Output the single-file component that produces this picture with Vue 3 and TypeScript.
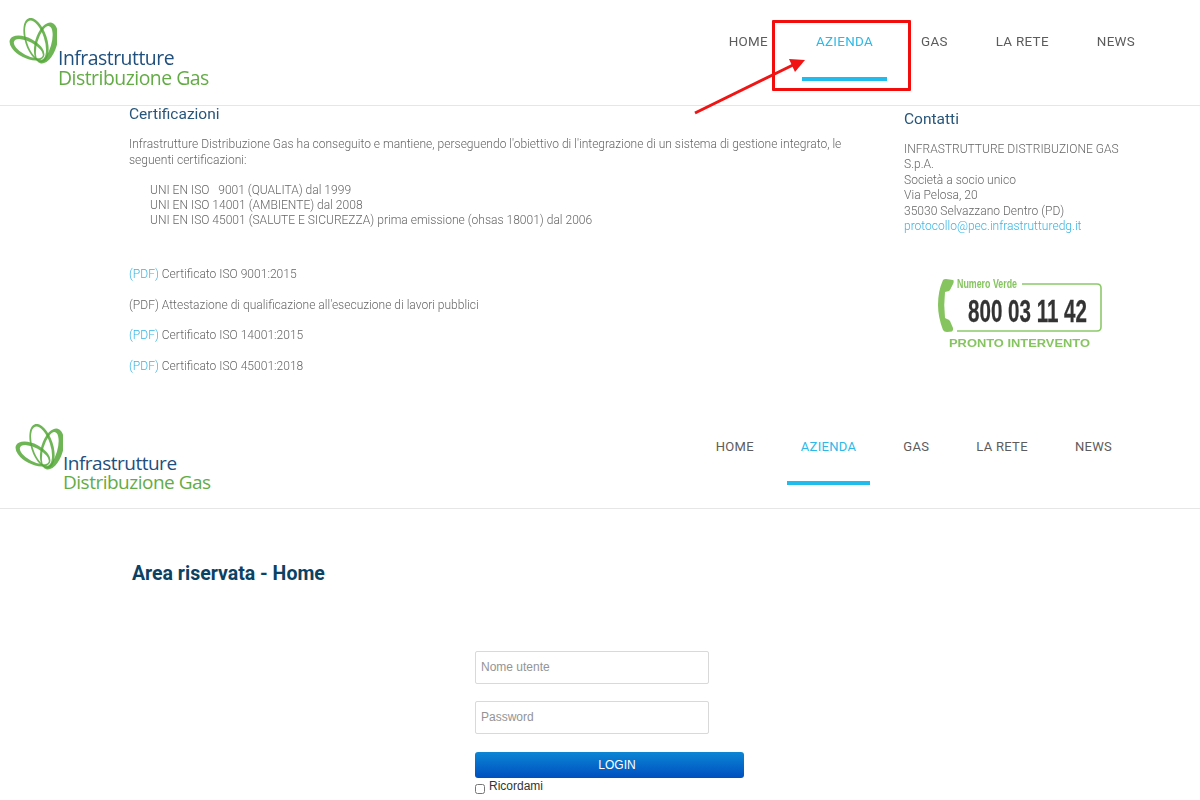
<template>
  <div class="page">
    <!-- simboli condivisi dai due header -->
    <svg class="defs" width="0" height="0">
      <symbol id="logo-mark" viewBox="0 0 48 48">
        <g fill="#55a838" fill-rule="evenodd" fill-opacity="0.85">
          <path transform="translate(18 30) rotate(28)" d="M-19 0a19 10 0 1 0 38 0a19 10 0 1 0 -38 0Z M-14.5 0a16 6.8 0 1 0 32 0a16 6.8 0 1 0 -32 0Z" />
          <path transform="translate(27 22) rotate(72)" d="M-23 0a23 11 0 1 0 46 0a23 11 0 1 0 -46 0Z M-20.5 0.5a20.5 8.8 0 1 0 41 0a20.5 8.8 0 1 0 -41 0Z" />
          <path transform="translate(37 25) rotate(106)" d="M-21 0a21 11 0 1 0 42 0a21 11 0 1 0 -42 0Z M-17 1.5a18 7 0 1 0 36 0a18 7 0 1 0 -36 0Z" />
        </g>
      </symbol>
    </svg>

    <section class="capture">
      <div class="capture-body">
        <header class="site-header top-header">
          <div class="logo">
            <svg class="logo-mark"><use href="#logo-mark" /></svg>
            <div class="logo-text">
              <span class="logo-blue">Infrastrutture</span>
              <span class="logo-green">Distribuzione Gas</span>
            </div>
          </div>
          <nav class="nav">
            <a v-for="item in navItems" :key="item" class="nav-item" :class="{ active: item === 'AZIENDA' }">{{ item }}</a>
          </nav>
        </header>

        <div class="content">
          <main class="main-col">
            <h2 class="section-title">Certificazioni</h2>
            <p class="intro">
              Infrastrutture Distribuzione Gas ha conseguito e mantiene, perseguendo l'obiettivo di l'integrazione di un sistema di gestione integrato, le seguenti certificazioni:
            </p>
            <ul class="cert-list">
              <li v-for="cert in certs" :key="cert">{{ cert }}</li>
            </ul>
            <div class="docs">
              <p v-for="doc in docs" :key="doc.label">
                <span :class="{ link: doc.linked }">(PDF)</span> {{ doc.label }}
              </p>
            </div>
          </main>
          <aside class="side-col">
            <h2 class="section-title contact-title">Contatti</h2>
            <p class="contact">
              INFRASTRUTTURE DISTRIBUZIONE GAS S.p.A.<br />
              Società a socio unico<br />
              Via Pelosa, 20<br />
              35030 Selvazzano Dentro (PD)<br />
              <span class="link">protocollo@pec.infrastrutturedg.it</span>
            </p>
            <svg class="badge" width="170" height="76" viewBox="0 0 170 76">
              <path d="M7 5 Q8 4 10 4 L17 5 Q18 5 17.5 8 L14 15 Q13.5 16 11 16.5 L9 17 Q7.5 30 9 43 L11 44 Q13 44.5 14 46 L17 53 Q17.5 56 16 56.5 L11 57 Q8 57 7 55 Q2 42 2 30 Q2 16 7 5 Z" fill="#86c460" />
              <path d="M86 9 H161 Q165 9 165 13 V52 Q165 56 161 56 H21" fill="none" stroke="#8cc96a" stroke-width="1.6" />
              <text x="21" y="13" class="badge-small" textLength="60" lengthAdjust="spacingAndGlyphs">Numero Verde</text>
              <text x="32" y="47" class="badge-number" textLength="119" lengthAdjust="spacingAndGlyphs">800 03 11 42</text>
              <text x="13" y="72" class="badge-label" textLength="141" lengthAdjust="spacingAndGlyphs">PRONTO INTERVENTO</text>
            </svg>
          </aside>
        </div>
      </div>

      <!-- annotazione sopra la cattura -->
      <div class="highlight"></div>
      <svg class="arrow" width="130" height="70" viewBox="0 0 130 70">
        <line x1="5" y1="63" x2="103" y2="15" stroke="#f01414" stroke-width="3" />
        <polygon points="115,10 99,9 105,22" fill="#f01414" />
      </svg>
    </section>

    <section class="portal">
      <header class="site-header bottom-header">
        <div class="logo">
          <svg class="logo-mark"><use href="#logo-mark" /></svg>
          <div class="logo-text">
            <span class="logo-blue">Infrastrutture</span>
            <span class="logo-green">Distribuzione Gas</span>
          </div>
        </div>
        <nav class="nav">
          <a v-for="item in navItems" :key="item" class="nav-item" :class="{ active: item === 'AZIENDA' }">{{ item }}</a>
        </nav>
      </header>

      <h1 class="portal-title">Area riservata - Home</h1>

      <form class="login" @submit.prevent>
        <input class="field" type="text" placeholder="Nome utente" />
        <input class="field" type="password" placeholder="Password" />
        <button class="login-btn" type="submit">LOGIN</button>
        <label class="remember"><input type="checkbox" />Ricordami</label>
      </form>
    </section>
  </div>
</template>

<script setup lang="ts">
  interface DocItem {
    label: string
    linked: boolean
  }

  const navItems: string[] = ['HOME', 'AZIENDA', 'GAS', 'LA RETE', 'NEWS']

  const certs: string[] = [
    'UNI EN ISO \u00a0 9001 (QUALITA) dal 1999',
    'UNI EN ISO 14001 (AMBIENTE) dal 2008',
    'UNI EN ISO 45001 (SALUTE E SICUREZZA) prima emissione (ohsas 18001) dal 2006',
  ]

  const docs: DocItem[] = [
    { label: 'Certificato ISO 9001:2015', linked: true },
    { label: "Attestazione di qualificazione all'esecuzione di lavori pubblici", linked: false },
    { label: 'Certificato ISO 14001:2015', linked: true },
    { label: 'Certificato ISO 45001:2018', linked: true },
  ]
</script>

<style>
  html,
  body {
    background: #ffffff;
    overflow: hidden;
  }
</style>

<style scoped>
  .page {
    width: 1200px;
    height: 800px;
    overflow: hidden;
    font-family: Roboto, 'Liberation Sans', sans-serif;
    background: #ffffff;
  }

  .defs {
    display: block;
    position: absolute;
  }

  .capture {
    position: relative;
    height: 405px;
  }

  /* la cattura in alto nel riferimento è leggermente sfocata */
  .capture-body {
    filter: blur(0.35px);
  }

  .site-header {
    display: flex;
    justify-content: space-between;
    border-bottom: 1px solid #e6e6e6;
    box-sizing: border-box;
  }

  .top-header {
    height: 106px;
    padding: 18px 51px 0 9px;
  }

  .bottom-header {
    height: 104px;
    padding: 19px 74px 0 15px;
  }

  .logo {
    position: relative;
    width: 220px;
    height: 68px;
  }

  .logo-mark {
    display: block;
    width: 48px;
    height: 48px;
  }

  .logo-text {
    position: absolute;
    left: 49px;
    top: 30px;
    display: flex;
    flex-direction: column;
    font-family: 'Open Sans', sans-serif;
    font-size: 19.4px;
    line-height: 20px;
    letter-spacing: -0.5px;
    white-space: nowrap;
  }

  .bottom-header .logo-text {
    left: 48px;
    top: 29.5px;
    font-size: 19px;
    line-height: 19.5px;
  }

  .logo-blue {
    color: #1f4f7d;
  }

  .logo-green {
    color: #63ac45;
  }

  .nav {
    display: flex;
    gap: 20px;
  }

  .bottom-header .nav {
    gap: 19px;
  }

  .nav-item {
    display: block;
    box-sizing: border-box;
    padding: 16px 14px 0;
    height: 63px;
    font-size: 13.4px;
    line-height: 16px;
    letter-spacing: 0.3px;
    color: #5c5c5c;
    border-bottom: 4px solid transparent;
  }

  .bottom-header .nav-item {
    padding-top: 15px;
    height: 61px;
    font-size: 13px;
  }

  .nav-item.active {
    color: #2cb9e8;
    border-bottom-color: #22bcec;
  }

  .highlight {
    position: absolute;
    left: 772px;
    top: 20px;
    width: 139px;
    height: 71px;
    box-sizing: border-box;
    border: 3px solid #f20d0d;
    border-radius: 1px;
  }

  .arrow {
    position: absolute;
    left: 690px;
    top: 50px;
  }

  .content {
    display: flex;
    padding-left: 129px;
    font-size: 12.04px;
    font-weight: 300;
    color: #666666;
  }

  .main-col {
    width: 720px;
    margin-top: -1px;
    margin-right: 55px;
  }

  .section-title {
    margin: 0;
    font-size: 15.5px;
    line-height: 18px;
    font-weight: 400;
    color: #28567a;
  }

  .intro {
    margin: 13px 0 0;
    line-height: 16px;
  }

  .cert-list {
    list-style: none;
    margin: 15px 0 0;
    padding: 0 0 0 21px;
    line-height: 15px;
  }

  .docs {
    margin-top: 39px;
  }

  .docs p {
    margin: 0 0 16.7px;
    line-height: 14px;
  }

  .link {
    color: #35b4e4;
  }

  .side-col {
    width: 225px;
  }

  .contact-title {
    margin-top: 4px;
  }

  .contact {
    margin: 14px 0 0;
    line-height: 15.4px;
  }

  .badge {
    display: block;
    margin: 41px 0 0 32px;
  }

  .badge-small {
    font-family: 'Liberation Sans', sans-serif;
    font-size: 12px;
    font-weight: 700;
    fill: #86c460;
  }

  .badge-number {
    font-family: 'Liberation Sans', sans-serif;
    font-size: 32px;
    font-weight: 700;
    fill: #333333;
    stroke: #333333;
    stroke-width: 0.3px;
  }

  .badge-label {
    font-family: 'Liberation Sans', sans-serif;
    font-size: 11.5px;
    font-weight: 700;
    fill: #86c460;
  }

  .portal-title {
    margin: 54px 0 0 132px;
    font-size: 19.5px;
    line-height: 22px;
    font-weight: 700;
    color: #0b4263;
  }

  .login {
    display: flex;
    flex-direction: column;
    align-items: flex-start;
    margin: 66px 0 0 475px;
    font-family: 'Liberation Sans', sans-serif;
  }

  .field {
    width: 234px;
    height: 33px;
    box-sizing: border-box;
    margin-bottom: 17px;
    padding: 0 5px 2px;
    border: 1px solid #d9d9d9;
    border-radius: 2px;
    font-family: inherit;
    font-size: 12px;
    background: #ffffff;
  }

  .field::placeholder {
    color: #949494;
  }

  .login-btn {
    width: 269px;
    height: 26px;
    margin-top: 1px;
    padding: 0 0 1px 15px;
    border: none;
    border-radius: 3px;
    font-family: inherit;
    font-size: 12px;
    font-weight: 400;
    color: #ffffff;
    background: linear-gradient(#0b86d4, #004fc0);
  }

  .remember {
    display: flex;
    align-items: center;
    gap: 4px;
    height: 16px;
    font-size: 12px;
    color: #333333;
  }

  .remember input {
    width: 10px;
    height: 10px;
    margin: 5px 0 0;
  }
</style>
